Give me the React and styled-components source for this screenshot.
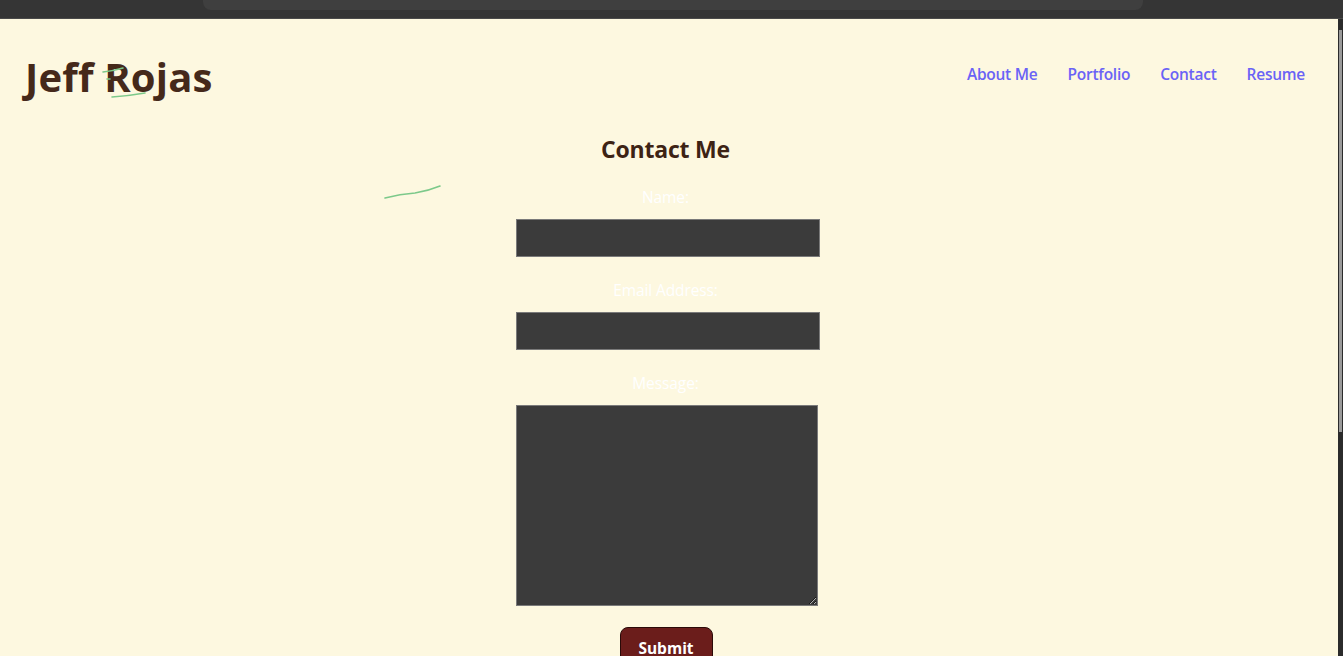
import React from "react";
import styled, { createGlobalStyle } from "styled-components";

const GlobalStyle = createGlobalStyle`
  html, body {
    margin: 0;
    padding: 0;
    height: 100%;
    overflow: hidden;
    background: #fdf8e0;
  }
  #root {
    height: 100%;
  }
  * {
    box-sizing: border-box;
  }
`;

const Frame = styled.div`
  display: flex;
  flex-direction: column;
  width: 1343px;
  height: 656px;
  overflow: hidden;
`;

const Chrome = styled.div`
  height: 19px;
  flex-shrink: 0;
  background: #353535;
  border-bottom: 1px solid #4a4a4a;
  padding-left: 203px;
`;

const AddressBar = styled.div`
  width: 940px;
  height: 10px;
  background: #3f3f3f;
  border-radius: 0 0 8px 8px;
`;

const Body = styled.div`
  flex: 1;
  display: flex;
  min-height: 0;
`;

const Page = styled.div`
  position: relative;
  flex: 1;
  background: #fdf8e0;
  font-family: "Open Sans", "Noto Sans", sans-serif;
`;

const Scrollbar = styled.div`
  width: 5px;
  background: #2b2b2b;
  padding: 11px 0 0 1px;
`;

const Thumb = styled.div`
  width: 3px;
  height: 402px;
  background: #9a9a9a;
`;

const Header = styled.header`
  display: flex;
  justify-content: space-between;
  align-items: center;
  padding: 32px 33px 0 25px;
`;

const Logo = styled.h1`
  margin: 0;
  font-size: 40px;
  line-height: 52px;
  font-weight: 700;
  letter-spacing: 0.2px;
  color: #45291a;
`;

const Nav = styled.nav`
  display: flex;
  gap: 30px;
  margin-top: -6px;
`;

const NavLink = styled.a`
  font-size: 15.5px;
  font-weight: 600;
  color: #6a63f6;
  text-decoration: none;
  letter-spacing: -0.25px;
`;

const Section = styled.section`
  display: flex;
  flex-direction: column;
  align-items: center;
  padding-right: 2px;
`;

const Title = styled.h2`
  margin: 31px 0 0 -5px;
  font-size: 23px;
  line-height: 30px;
  font-weight: 700;
  color: #3d2314;
  letter-spacing: -0.2px;
`;

const Form = styled.form`
  display: flex;
  flex-direction: column;
  align-items: center;
  margin-top: 22px;
`;

const Label = styled.label`
  font-size: 15.5px;
  line-height: 22px;
  color: #ffffff;
  margin: ${(p) => (p.$first ? "0" : "22px")} 0 11px -5px;
  letter-spacing: -0.1px;
`;

const Input = styled.input`
  display: block;
  width: 304px;
  height: 38px;
  background: #3b3b3b;
  border: 1px solid #7a7a7a;
  color: #fff;
  outline: none;
`;

const TextArea = styled.textarea`
  display: block;
  width: 302px;
  height: 201px;
  background: #3b3b3b;
  border: 1px solid #7a7a7a;
  color: #fff;
  outline: none;
  margin-left: -2px;
  resize: both;
`;

const Submit = styled.button`
  margin-top: 21px;
  width: 93px;
  height: 42px;
  background: #6b1d1b;
  color: #ffffff;
  border: 1px solid #2a0a08;
  border-radius: 8px;
  font-family: "Open Sans", "Noto Sans", sans-serif;
  font-size: 15.5px;
  font-weight: 700;
  padding: 0;
  margin-left: -4px;
`;

const Marks = styled.svg`
  position: absolute;
  left: 0;
  top: 0;
  width: 500px;
  height: 200px;
  pointer-events: none;
`;

export default function App() {
  return (
    <>
      <GlobalStyle />
      <Frame>
        <Chrome>
          <AddressBar />
        </Chrome>
        <Body>
          <Page>
            <Header>
              <Logo>Jeff Rojas</Logo>
              <Nav>
                <NavLink href="#about">About Me</NavLink>
                <NavLink href="#portfolio">Portfolio</NavLink>
                <NavLink href="#contact">Contact</NavLink>
                <NavLink href="#resume">Resume</NavLink>
              </Nav>
            </Header>
            <Section>
              <Title>Contact Me</Title>
              <Form onSubmit={(e) => e.preventDefault()}>
                <Label $first htmlFor="name">Name:</Label>
                <Input id="name" type="text" />
                <Label htmlFor="email">Email Address:</Label>
                <Input id="email" type="email" />
                <Label htmlFor="message">Message:</Label>
                <TextArea id="message" />
                <Submit type="submit">Submit</Submit>
              </Form>
            </Section>
            <Marks viewBox="0 0 500 200">
              <g fill="none" stroke="#7cc98a" strokeWidth="1.6" strokeLinecap="round">
                <path d="M103 53 Q113 52 123 49" />
                <path d="M107 60 L110 60" />
                <path d="M112 78 Q128 77 145 74" />
                <path d="M385 179 Q400 175 415 174 Q428 172 440 167" />
              </g>
            </Marks>
          </Page>
          <Scrollbar>
            <Thumb />
          </Scrollbar>
        </Body>
      </Frame>
    </>
  );
}
